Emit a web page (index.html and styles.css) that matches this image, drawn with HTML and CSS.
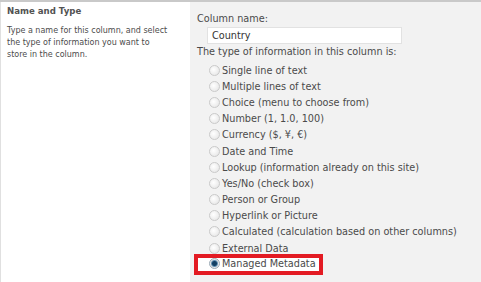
FILE: index.html
```html
<!DOCTYPE html>
<html lang="en">
  <head>
    <meta charset="UTF-8" />
    <title>Name and Type</title>
    <link rel="stylesheet" href="styles.css">
  </head>
  <body>
    <div class="section">
      <div class="info">
        <h3>Name and Type</h3>
        <p>Type a name for this column, and select the type of information you want to store in the column.</p>
      </div>
      <div class="fields">
        <label for="colName">Column name:</label>
        <input type="text" id="colName" value="Country" />
        <div class="type-label">The type of information in this column is:</div>
        <ul class="types">
          <li><span class="radio"></span>Single line of text</li>
          <li><span class="radio"></span>Multiple lines of text</li>
          <li><span class="radio"></span>Choice (menu to choose from)</li>
          <li><span class="radio"></span>Number (1, 1.0, 100)</li>
          <li><span class="radio"></span>Currency ($, ¥, €)</li>
          <li><span class="radio"></span>Date and Time</li>
          <li><span class="radio"></span>Lookup (information already on this site)</li>
          <li><span class="radio"></span>Yes/No (check box)</li>
          <li><span class="radio"></span>Person or Group</li>
          <li><span class="radio"></span>Hyperlink or Picture</li>
          <li><span class="radio"></span>Calculated (calculation based on other columns)</li>
          <li><span class="radio"></span>External Data</li>
          <li class="selected"><span class="radio checked"></span>Managed Metadata</li>
        </ul>
      </div>
    </div>
  </body>
</html>
```

FILE: styles.css
```css
body {
  margin: 0;
  font-family: "DejaVu Sans", Verdana, sans-serif;
  background-color: #f2f2f2;
}

.section {
  display: flex;
  border-top: 2px solid #c9c9c9;
  height: 280px;
}

.info {
  width: 190px;
  background-color: #fff;
  border-left: 1px solid #e0e0e0;
  padding: 4px 0 0 6px;
  box-sizing: border-box;
}

.info h3 {
  margin: 0;
  font-size: 8.6px;
  font-weight: bold;
  color: #525252;
}

.info p {
  margin: 9px 0 0;
  font-size: 8px;
  line-height: 12px;
  color: #4c4c4c;
  width: 164px;
}

.fields {
  flex: 1;
  padding: 11px 0 0 7px;
  font-size: 9.7px;
  color: #4a4a4a;
}

.fields label {
  display: block;
}

.fields input {
  display: block;
  margin: 3px 0 0 10px;
  width: 195px;
  height: 17px;
  box-sizing: border-box;
  border: 1px solid #e2e2e2;
  padding: 1px 4px;
  font-family: inherit;
  font-size: 9.7px;
  color: #333;
}

.type-label {
  margin-top: 2px;
}

.types {
  list-style: none;
  margin: 5px 0 0;
  padding: 0;
}

.types li {
  display: flex;
  align-items: center;
  height: 16.2px;
  padding-left: 12px;
}

.radio {
  width: 11px;
  height: 11px;
  border-radius: 50%;
  border: 1px solid #cacaca;
  background: radial-gradient(circle at 40% 40%, #fff, #e2e2e2);
  margin-right: 2px;
  box-sizing: border-box;
}

.radio.checked {
  border-color: #9aa9b5;
  background: radial-gradient(circle, #123f63 0 2px, #5f8db0 3px, #e6e6e6 4px);
}

.types .selected {
  width: 129px;
  height: 21px;
  box-sizing: border-box;
  margin: -2px 0 0 -3px;
  padding: 0 0 2px 11px;
  border: 4px solid #e31b23;
  background-color: #fff;
}
```
